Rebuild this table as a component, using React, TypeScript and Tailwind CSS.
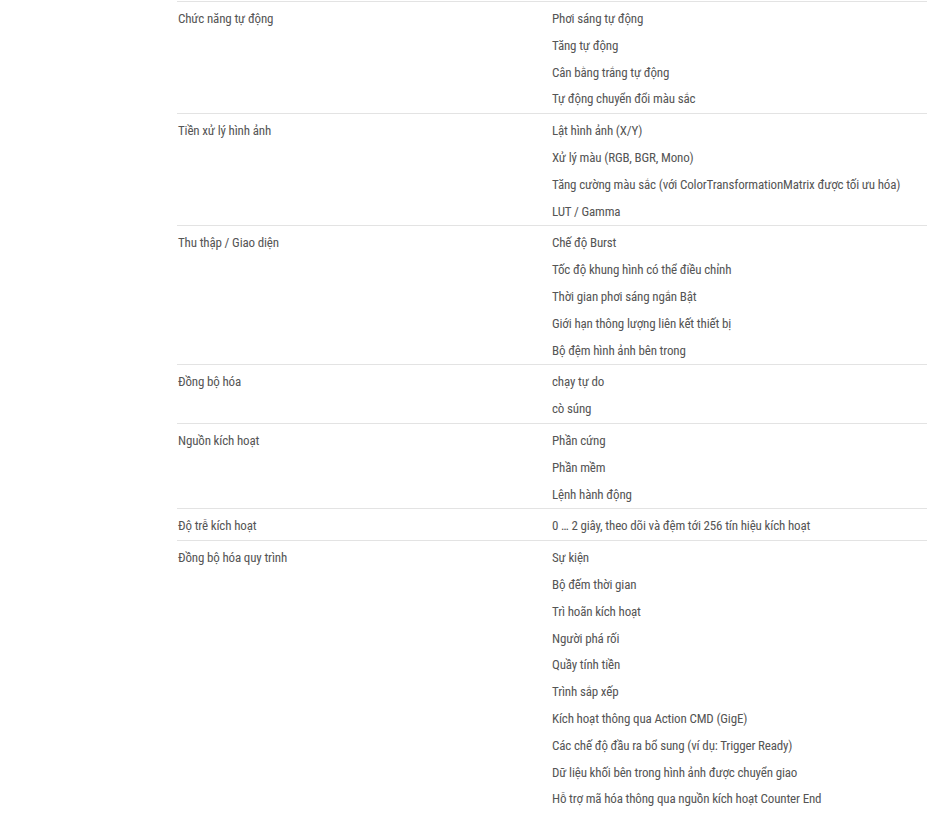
const rows: { label: string; items: string[] }[] = [
  {
    label: "Chức năng tự động",
    items: ["Phơi sáng tự động", "Tăng tự động", "Cân bằng trắng tự động", "Tự động chuyển đổi màu sắc"],
  },
  {
    label: "Tiền xử lý hình ảnh",
    items: [
      "Lật hình ảnh (X/Y)",
      "Xử lý màu (RGB, BGR, Mono)",
      "Tăng cường màu sắc (với ColorTransformationMatrix được tối ưu hóa)",
      "LUT / Gamma",
    ],
  },
  {
    label: "Thu thập / Giao diện",
    items: [
      "Chế độ Burst",
      "Tốc độ khung hình có thể điều chỉnh",
      "Thời gian phơi sáng ngắn Bật",
      "Giới hạn thông lượng liên kết thiết bị",
      "Bộ đệm hình ảnh bên trong",
    ],
  },
  { label: "Đồng bộ hóa", items: ["chạy tự do", "cò súng"] },
  { label: "Nguồn kích hoạt", items: ["Phần cứng", "Phần mềm", "Lệnh hành động"] },
  {
    label: "Độ trễ kích hoạt",
    items: ["0 … 2 giây, theo dõi và đệm tới 256 tín hiệu kích hoạt"],
  },
  {
    label: "Đồng bộ hóa quy trình",
    items: [
      "Sự kiện",
      "Bộ đếm thời gian",
      "Trì hoãn kích hoạt",
      "Người phá rối",
      "Quầy tính tiền",
      "Trình sắp xếp",
      "Kích hoạt thông qua Action CMD (GigE)",
      "Các chế độ đầu ra bổ sung (ví dụ: Trigger Ready)",
      "Dữ liệu khối bên trong hình ảnh được chuyển giao",
      "Hỗ trợ mã hóa thông qua nguồn kích hoạt Counter End",
    ],
  },
];

export default function App() {
  return (
    <div
      className="min-h-[813px] bg-white pt-[1px] text-[13px] tracking-[-0.16px] text-[#555]"
      style={{ fontFamily: '"Roboto Condensed", "Liberation Sans Narrow", Roboto, sans-serif' }}
    >
      <div className="ml-[177px] w-[750px]">
        {rows.map((row) => (
          <div key={row.label} className="grid grid-cols-2 border-t border-[#e3e3e3] pt-[4px]">
            <div className="pl-[1px] leading-[26.8px]">{row.label}</div>
            <div>
              {row.items.map((it) => (
                <div key={it} className="leading-[26.8px]">
                  {it}
                </div>
              ))}
            </div>
          </div>
        ))}
      </div>
    </div>
  );
}
